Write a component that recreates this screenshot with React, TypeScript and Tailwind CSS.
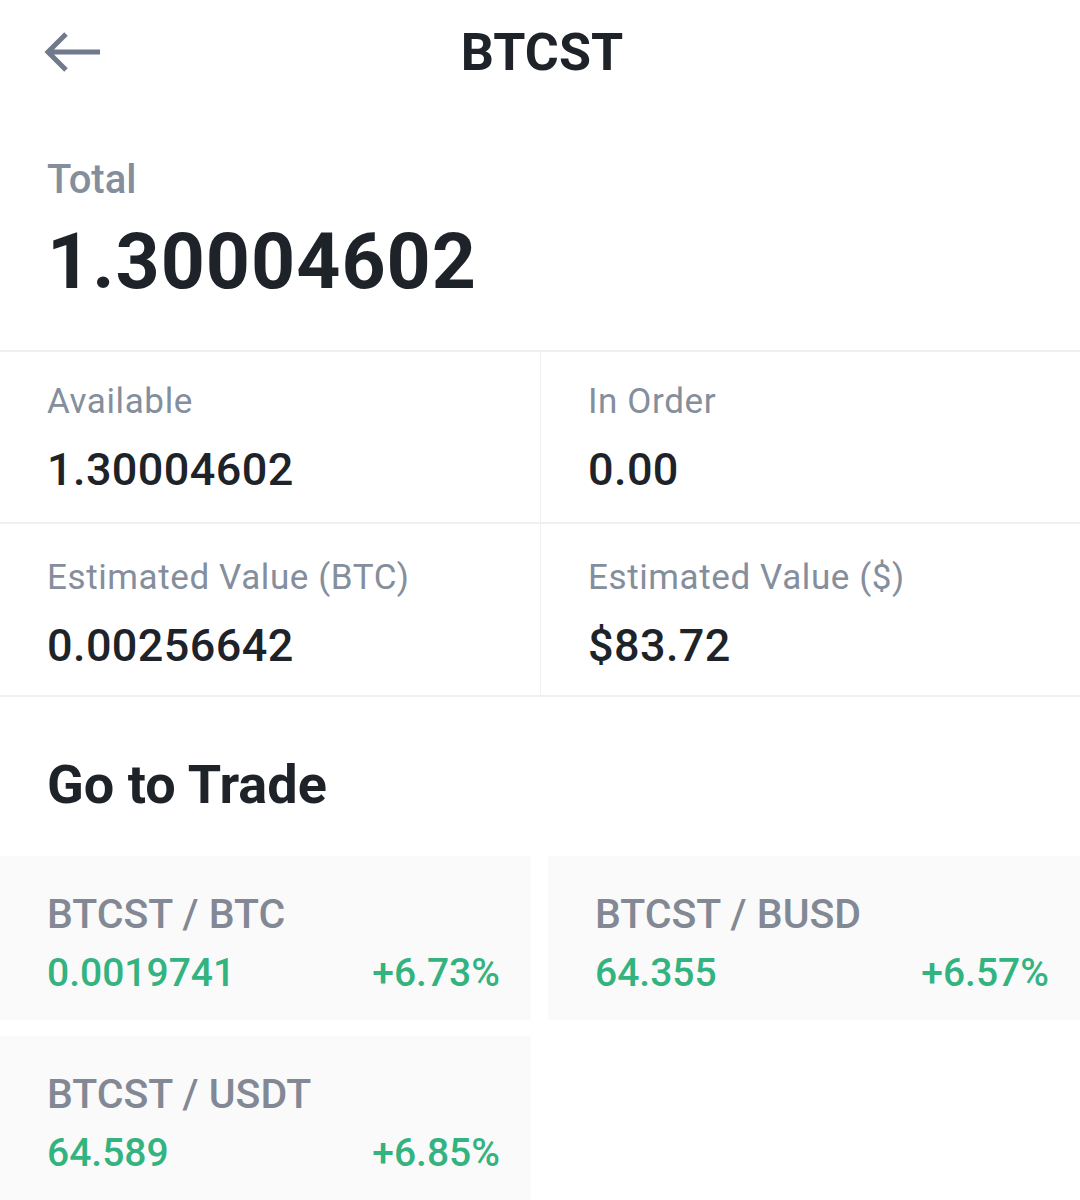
import React from "react";

const font = { fontFamily: "Roboto, 'Noto Sans', sans-serif" };

function Cell({ label, value, right, shift }: { label: string; value: string; right?: boolean; shift?: boolean }) {
  return (
    <div className={`flex flex-col justify-center pl-[47px] ${right ? "border-l border-[#eef0f2]" : ""} ${shift ? "pt-[10px]" : "pt-[2px]"}`}>
      <div className="text-[35px] leading-[40px] text-[#848e9c] tracking-[0.6px]">{label}</div>
      <div className="mt-[23px] text-[45px] leading-[50px] font-medium text-[#1e2329] tracking-[0.4px]">{value}</div>
    </div>
  );
}

function Card({ pair, price, change }: { pair: string; price: string; change: string }) {
  return (
    <div className="h-[164px] bg-[#fafafa] flex flex-col justify-center pt-[10px] pl-[47px] pr-[31px]">
      <div className="text-[41px] leading-[46px] font-medium text-[#828894]">{pair}</div>
      <div className="mt-[13px] flex justify-between text-[39px] leading-[46px] font-medium text-[#33b37f]">
        <span>{price}</span>
        <span>{change}</span>
      </div>
    </div>
  );
}

export default function App() {
  return (
    <div className="w-[1080px] h-[1200px] bg-white overflow-hidden" style={font}>
      <div className="relative h-[106px] flex items-center justify-center">
        <svg className="absolute left-[44px] top-[30px]" width="60" height="44" viewBox="0 0 60 44" fill="none">
          <path d="M56 22H5M22 4L4 22l18 18" stroke="#707a8a" strokeWidth="5" strokeLinecap="butt" strokeLinejoin="miter" />
        </svg>
        <div className="text-[52px] leading-[60px] font-bold text-[#1e2329] translate-x-[2px]">BTCST</div>
      </div>
      <div className="pt-[51px] pb-[43px] pl-[47px]">
        <div className="text-[40px] leading-[46px] font-medium text-[#848e9c]">Total</div>
        <div className="mt-[14px] text-[77px] leading-[90px] font-bold text-[#1e2329] tracking-[1px]">1.30004602</div>
      </div>
      <div className="grid grid-cols-2 border-t-2 border-[#eef0f2]">
        <div className="h-[172px] grid grid-cols-2 col-span-2 border-b-2 border-[#eef0f2]">
          <Cell label="Available" value="1.30004602" />
          <Cell label="In Order" value="0.00" right />
        </div>
        <div className="h-[173px] grid grid-cols-2 col-span-2 border-b-2 border-[#eef0f2]">
          <Cell label="Estimated Value (BTC)" value="0.00256642" shift />
          <Cell label="Estimated Value ($)" value="$83.72" right shift />
        </div>
      </div>
      <div className="pt-[58px] pb-[41px] pl-[47px] text-[54px] leading-[60px] font-bold text-[#1e2329]">Go to Trade</div>
      <div className="grid grid-cols-[531px_532px] gap-x-[17px] gap-y-[16px]">
        <Card pair="BTCST / BTC" price="0.0019741" change="+6.73%" />
        <Card pair="BTCST / BUSD" price="64.355" change="+6.57%" />
        <Card pair="BTCST / USDT" price="64.589" change="+6.85%" />
      </div>
    </div>
  );
}
